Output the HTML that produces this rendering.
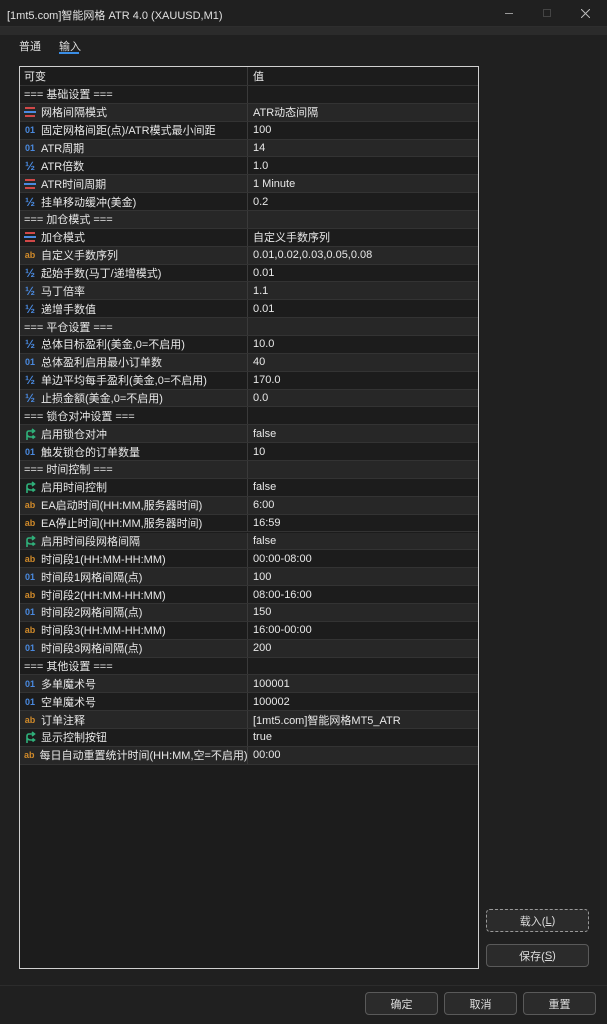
<!DOCTYPE html><html><head><meta charset="utf-8"><style>
*{margin:0;padding:0;box-sizing:border-box}
body{width:607px;height:1024px;background:#202020;font-family:"Liberation Sans","Noto Sans CJK SC",sans-serif;font-size:11px;color:#e8e8e8;position:relative;overflow:hidden}
.title{position:absolute;left:0;top:0;width:607px;height:27px;background:#202020;border-bottom:1px solid #2e2e2e}
.title span{position:absolute;left:7px;top:7px;font-size:11px;color:#e0e0e0}
.strip{position:absolute;left:0;top:27px;width:607px;height:8px;background:#2b2b2b}
.tabs{position:absolute;left:0;top:35px;width:607px;height:950px;background:#202020}
.tab{position:absolute;top:38px;font-size:11px;color:#ddd}
.ul{position:absolute;left:59px;top:52px;width:20px;height:2px;background:#3a8ee6}
.tbl{position:absolute;left:19px;top:66px;width:460px;height:903px;border:1px solid #d0d0d0;background:#1c1c1c;overflow:hidden}
.row{position:absolute;left:0;width:458px;height:17.86px;border-bottom:1px solid #333;display:flex;align-items:center}
.row.l{background:#272727}
.c1{width:228px;height:100%;border-right:1px solid #3a3a3a;display:flex;align-items:center;padding-left:4px;white-space:nowrap;overflow:hidden}
.c2{padding-left:5px;white-space:nowrap;height:100%;display:flex;align-items:center}
.ic{display:inline-block;width:12px;margin-right:5px;font-size:9px;font-weight:bold;text-align:center}
.btn{position:absolute;height:23px;border:1px solid #5a5a5a;border-radius:4px;background:#2b2b2b;color:#ddd;font-size:11px;display:flex;align-items:center;justify-content:center}
.foot{position:absolute;left:0;top:985px;width:607px;height:39px;background:#202020;border-top:1px solid #2c2c2c}
</style></head><body>
<div class="title"><span>[1mt5.com]智能网格 ATR 4.0 (XAUUSD,M1)</span>
<div style="position:absolute;left:505px;top:13px;width:8px;height:1px;background:#999"></div>
<div style="position:absolute;left:543px;top:9px;width:8px;height:8px;border:1px solid #444"></div>
<svg style="position:absolute;left:581px;top:9px" width="9" height="9"><path d="M0 0L9 9M9 0L0 9" stroke="#bbb" stroke-width="1"/></svg>
</div>
<div class="strip"></div>
<div class="tabs"></div>
<div class="tab" style="left:19px">普通</div>
<div class="tab" style="left:59px">输入</div>
<div class="ul"></div>
<div class="tbl" id="t"></div>
<div class="btn" style="left:486px;top:909px;width:103px;border-color:#999;border-style:dashed">载入(<u>L</u>)</div>
<div class="btn" style="left:486px;top:944px;width:103px">保存(<u>S</u>)</div>
<div class="foot"></div>
<div class="btn" style="left:365px;top:992px;width:73px">确定</div>
<div class="btn" style="left:444px;top:992px;width:73px">取消</div>
<div class="btn" style="left:523px;top:992px;width:73px">重置</div>
<script>
var R=[["","可变","值"],["","=== 基础设置 ===",""],["e","网格间隔模式","ATR动态间隔"],["i","固定网格间距(点)/ATR模式最小间距","100"],["i","ATR周期","14"],["d","ATR倍数","1.0"],["e","ATR时间周期","1 Minute"],["d","挂单移动缓冲(美金)","0.2"],["","=== 加仓模式 ===",""],["e","加仓模式","自定义手数序列"],["a","自定义手数序列","0.01,0.02,0.03,0.05,0.08"],["d","起始手数(马丁/递增模式)","0.01"],["d","马丁倍率","1.1"],["d","递增手数值","0.01"],["","=== 平仓设置 ===",""],["d","总体目标盈利(美金,0=不启用)","10.0"],["i","总体盈利启用最小订单数","40"],["d","单边平均每手盈利(美金,0=不启用)","170.0"],["d","止损金额(美金,0=不启用)","0.0"],["","=== 锁仓对冲设置 ===",""],["b","启用锁仓对冲","false"],["i","触发锁仓的订单数量","10"],["","=== 时间控制 ===",""],["b","启用时间控制","false"],["a","EA启动时间(HH:MM,服务器时间)","6:00"],["a","EA停止时间(HH:MM,服务器时间)","16:59"],["b","启用时间段网格间隔","false"],["a","时间段1(HH:MM-HH:MM)","00:00-08:00"],["i","时间段1网格间隔(点)","100"],["a","时间段2(HH:MM-HH:MM)","08:00-16:00"],["i","时间段2网格间隔(点)","150"],["a","时间段3(HH:MM-HH:MM)","16:00-00:00"],["i","时间段3网格间隔(点)","200"],["","=== 其他设置 ===",""],["i","多单魔术号","100001"],["i","空单魔术号","100002"],["a","订单注释","[1mt5.com]智能网格MT5_ATR"],["b","显示控制按钮","true"],["a","每日自动重置统计时间(HH:MM,空=不启用)","00:00"]];
var I={e:'<svg class="ic" width="12" height="10" viewBox="0 0 12 10"><rect x="1" y="0" width="10" height="2" fill="#d04848"/><rect x="0" y="4" width="12" height="2" fill="#4a8ae0"/><rect x="1" y="8" width="10" height="2" fill="#d04848"/></svg>',i:'<span class="ic" style="color:#4a8ae0">01</span>',d:'<span class="ic" style="color:#4a8ae0;font-size:12px">½</span>',a:'<span class="ic" style="color:#d08a2a">ab</span>',b:'<svg class="ic" width="12" height="12" viewBox="0 0 12 12"><path d="M3 12V5Q3 3 5 3H10M8 1L10.5 3L8 5M3 7Q4 9 7 9H10M8.5 7.5L10.5 9L8.5 10.5" stroke="#2fb07a" stroke-width="1.6" fill="none"/></svg>'};
var h='';R.forEach(function(r,k){var top=k==0?0:19+(k-1)*17.86;var ht=k==0?19:17.86;h+='<div class="row'+(k>=2&&k%2==0?' l':'')+'" style="top:'+top+'px;height:'+ht+'px"><div class="c1">'+(I[r[0]]||'')+r[1]+'</div><div class="c2">'+r[2]+'</div></div>';});
document.getElementById('t').innerHTML=h;
</script>
</body></html>
